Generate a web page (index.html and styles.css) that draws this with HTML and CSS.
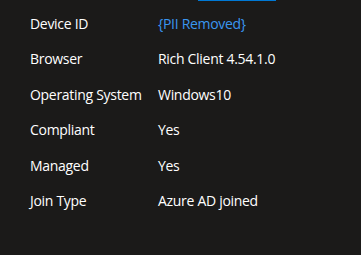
FILE: index.html
```html
<!DOCTYPE html>
<html lang="en">
<head>
    <meta charset="UTF-8">
    <meta name="viewport" content="width=device-width, initial-scale=1.0">
    <title>Device details</title>
    <link rel="stylesheet" href="styles.css">
</head>
<body>
    <div class="tab-strip">
        <div class="tab-indicator"></div>
    </div>
    <div class="details">
        <div class="row">
            <div class="label">Device ID</div>
            <div class="value link">{PII Removed}</div>
        </div>
        <div class="row">
            <div class="label">Browser</div>
            <div class="value">Rich Client 4.54.1.0</div>
        </div>
        <div class="row">
            <div class="label">Operating System</div>
            <div class="value">Windows10</div>
        </div>
        <div class="row">
            <div class="label">Compliant</div>
            <div class="value">Yes</div>
        </div>
        <div class="row">
            <div class="label">Managed</div>
            <div class="value">Yes</div>
        </div>
        <div class="row">
            <div class="label">Join Type</div>
            <div class="value">Azure AD joined</div>
        </div>
    </div>
</body>
</html>
```

FILE: styles.css
```css
body {
    margin: 0;
    background-color: #1b1a19;
    color: #ffffff;
    font-family: "Open Sans", "Noto Sans", sans-serif;
    font-size: 14px;
    line-height: 20px;
    letter-spacing: -0.3px;
}
.tab-strip {
    height: 1px;
    padding-left: 198px;
}
.tab-indicator {
    width: 78px;
    height: 1px;
    background-color: #0078d4;
}
.details {
    padding: 5px 0 0 30px;
}
.row {
    display: flex;
    align-items: center;
    height: 35.5px;
}
.label {
    width: 128px;
}
.link {
    color: #3a96f0;
}
```
